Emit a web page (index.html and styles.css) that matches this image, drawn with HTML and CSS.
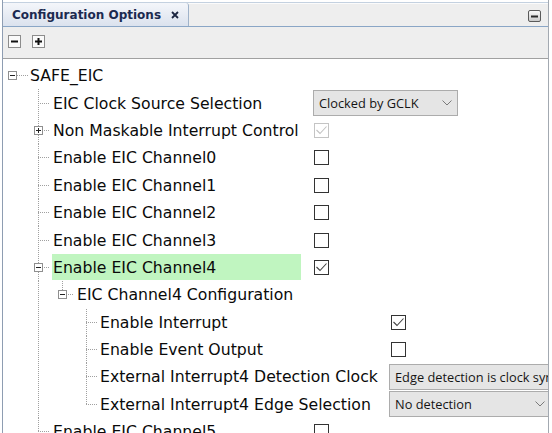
FILE: index.html
```html
<!DOCTYPE html>
<html>
<head>
<meta charset="utf-8">
<title>Configuration Options</title>
<link rel="stylesheet" href="styles.css">
</head>
<body>
<div class="panel">
  <div class="header">
    <div class="tab">
      <span class="tab-title">Configuration Options</span>
      <svg class="tab-close" width="8" height="8" viewBox="0 0 8 8"><path d="M1 1L7 7M7 1L1 7" stroke="#1b2540" stroke-width="1.8"/></svg>
    </div>
    <svg class="minimize" width="13" height="12" viewBox="0 0 13 12">
      <defs><linearGradient id="mg" x1="0" y1="0" x2="0" y2="1"><stop offset="0" stop-color="#fbfbfb"/><stop offset="1" stop-color="#c9c9c9"/></linearGradient></defs>
      <rect x="0.5" y="0.5" width="12" height="11" rx="1.5" fill="url(#mg)" stroke="#5a5a5a"/>
      <rect x="3" y="5.5" width="7" height="2" fill="#2a2a2a"/>
    </svg>
  </div>
  <div class="toolbar">
    <span class="tbtn">
      <svg width="13" height="13" viewBox="0 0 13 13"><rect x="0.5" y="0.5" width="12" height="12" fill="#fafafa" stroke="#8c8c8c"/><rect x="3" y="5.5" width="7" height="2" fill="#111"/></svg>
    </span>
    <span class="tbtn">
      <svg width="13" height="13" viewBox="0 0 13 13"><rect x="0.5" y="0.5" width="12" height="12" fill="#fafafa" stroke="#8c8c8c"/><rect x="3" y="5.5" width="7" height="2" fill="#111"/><rect x="5.5" y="3" width="2" height="7" fill="#111"/></svg>
    </span>
  </div>
  <div class="content">
    <div class="row root">
      <svg class="box" width="9" height="9" viewBox="0 0 9 9"><rect x="0.5" y="0.5" width="8" height="8" fill="#fff" stroke="#8f8f8f"/><path d="M2 4.5H7" stroke="#222"/></svg>
      <span class="hline"></span>
      <span class="label">SAFE_EIC</span>
    </div>
    <div class="group l1">
      <div class="row">
        <span class="conn"></span>
        <span class="label w1">EIC Clock Source Selection</span>
        <div class="select s1"><span>Clocked by GCLK</span><svg class="chev" width="10" height="6" viewBox="0 0 10 6"><path d="M0.5 0.5L5 5L9.5 0.5" fill="none" stroke="#7a7a7a"/></svg></div>
      </div>
      <div class="row">
        <span class="conn"><svg class="box" width="9" height="9" viewBox="0 0 9 9"><rect x="0.5" y="0.5" width="8" height="8" fill="#fff" stroke="#8f8f8f"/><path d="M2 4.5H7M4.5 2V7" stroke="#222"/></svg></span>
        <span class="label w1">Non Maskable Interrupt Control</span>
        <span class="cb dis"><svg width="13" height="13" viewBox="0 0 13 13"><path d="M1.5 6L5 9.5L11.5 2.5" fill="none" stroke="#c2c2c2" stroke-width="1.1"/></svg></span>
      </div>
      <div class="row">
        <span class="conn"></span>
        <span class="label w1">Enable EIC Channel0</span>
        <span class="cb"></span>
      </div>
      <div class="row">
        <span class="conn"></span>
        <span class="label w1">Enable EIC Channel1</span>
        <span class="cb"></span>
      </div>
      <div class="row">
        <span class="conn"></span>
        <span class="label w1">Enable EIC Channel2</span>
        <span class="cb"></span>
      </div>
      <div class="row">
        <span class="conn"></span>
        <span class="label w1">Enable EIC Channel3</span>
        <span class="cb"></span>
      </div>
      <div class="row">
        <span class="conn"><svg class="box" width="9" height="9" viewBox="0 0 9 9"><rect x="0.5" y="0.5" width="8" height="8" fill="#fff" stroke="#8f8f8f"/><path d="M2 4.5H7" stroke="#222"/></svg></span>
        <span class="label w1 selected">Enable EIC Channel4</span>
        <span class="cb"><svg width="13" height="13" viewBox="0 0 13 13"><path d="M1.5 6L5 9.5L11.5 2.5" fill="none" stroke="#444" stroke-width="1.1"/></svg></span>
      </div>
      <div class="sub">
        <div class="row">
          <span class="conn last"><svg class="box" width="9" height="9" viewBox="0 0 9 9"><rect x="0.5" y="0.5" width="8" height="8" fill="#fff" stroke="#8f8f8f"/><path d="M2 4.5H7" stroke="#222"/></svg></span>
          <span class="label">EIC Channel4 Configuration</span>
        </div>
        <div class="group l3">
          <div class="row">
            <span class="conn c3"></span>
            <span class="label w3">Enable Interrupt</span>
            <span class="cb cb3"><svg width="13" height="13" viewBox="0 0 13 13"><path d="M1.5 6L5 9.5L11.5 2.5" fill="none" stroke="#444" stroke-width="1.1"/></svg></span>
          </div>
          <div class="row">
            <span class="conn c3"></span>
            <span class="label w3">Enable Event Output</span>
            <span class="cb cb3"></span>
          </div>
          <div class="row">
            <span class="conn c3"></span>
            <span class="label w3">External Interrupt4 Detection Clock</span>
            <div class="select s2"><span>Edge detection is clock synchronized</span></div>
          </div>
          <div class="row">
            <span class="conn c3 last"></span>
            <span class="label w3">External Interrupt4 Edge Selection</span>
            <div class="select s3"><span>No detection</span><svg class="chev" width="10" height="6" viewBox="0 0 10 6"><path d="M0.5 0.5L5 5L9.5 0.5" fill="none" stroke="#7a7a7a"/></svg></div>
          </div>
        </div>
      </div>
      <div class="row">
        <span class="conn last"></span>
        <span class="label w1">Enable EIC Channel5</span>
        <span class="cb"></span>
      </div>
    </div>
  </div>
</div>
</body>
</html>
```

FILE: styles.css
```css
* { box-sizing: border-box; }

body {
  margin: 0;
  width: 552px;
  height: 433px;
  overflow: hidden;
  background: #ffffff;
  font-family: "DejaVu Sans", Verdana, sans-serif;
}

.panel {
  margin-left: 2px;
  width: 547px;
  height: 433px;
  border-left: 1px solid #8e9db2;
  border-right: 1px solid #a3a9b1;
  display: flex;
  flex-direction: column;
}

.header {
  margin-top: 2px;
  height: 25px;
  flex: none;
  border-top: 1px solid #c4d1e0;
  border-bottom: 1px solid #8aa6c6;
  background: linear-gradient(#fbfbfb 0 1px, #eeeeee 1px);
  display: flex;
  align-items: stretch;
}

.tab {
  width: 186px;
  display: flex;
  align-items: center;
  padding-left: 9px;
  background: linear-gradient(#f4f6fa, #dbe2ee);
  border-right: 1px solid #9fb2c9;
  border-top-right-radius: 3px;
}

.tab-title {
  font-family: "DejaVu Sans", sans-serif;
  font-weight: bold;
  font-size: 12px;
  color: #1b2a50;
}

.tab-close {
  margin-left: 10px;
  margin-top: 1px;
}

.minimize {
  margin-left: auto;
  margin-right: 7px;
  margin-top: 7px;
  align-self: flex-start;
}

.toolbar {
  height: 32px;
  flex: none;
  background: #eeeeee;
  border-bottom: 1px solid #a0a0a0;
  padding: 8px 0 0 5px;
  display: flex;
  gap: 11px;
  align-items: flex-start;
}

.tbtn { width: 13px; height: 13px; display: block; }
.tbtn svg { display: block; }

.content {
  flex: 1;
  overflow: hidden;
  padding-top: 3px;
  font-size: 15.7px;
  color: #0a0a0a;
}

.row {
  height: 27.4px;
  display: flex;
  align-items: center;
  white-space: nowrap;
}

.root { padding-left: 5px; }

.box { display: block; flex: none; }

.hline {
  width: 11px;
  height: 1px;
  margin-right: 1px;
  flex: none;
  background: repeating-linear-gradient(to right, #a0a0a0 0 1px, transparent 1px 2px);
}

.label {
  padding-left: 1px;
  display: flex;
  align-items: center;
  height: 26px;
}

.group.l1 { margin-left: 35px; }

.conn {
  align-self: stretch;
  width: 14px;
  flex: none;
  display: flex;
  align-items: center;
  background-image:
    repeating-linear-gradient(to bottom, #a0a0a0 0 1px, transparent 1px 2px),
    repeating-linear-gradient(to right, #a0a0a0 0 1px, transparent 1px 2px);
  background-size: 1px 100%, 12px 1px;
  background-position: 0 0, 0 50%;
  background-repeat: no-repeat;
}

.conn.last { background-size: 1px 50%, 12px 1px; }
.conn .box { margin-left: -4px; }
.conn.c3 { width: 13px; }

.w1 { width: 249px; margin-right: 12px; flex: none; }
.w3 { width: 278px; margin-right: 12px; flex: none; }

.selected { background: #c0f5c0; }

.sub {
  padding-left: 24px;
  background-image: repeating-linear-gradient(to bottom, #a0a0a0 0 1px, transparent 1px 2px);
  background-size: 1px 100%;
  background-repeat: no-repeat;
}

.group.l3 { margin-left: 24px; }

.select {
  height: 26px;
  flex: none;
  border: 1px solid #acacac;
  background: #e5e5e5;
  display: flex;
  align-items: center;
  padding-left: 5px;
  font-family: "Open Sans", "Noto Sans", sans-serif;
  font-size: 12.8px;
  color: #151515;
  overflow: hidden;
}

.s1 { width: 145px; }
.s2 { width: 230px; }
.s3 { width: 162px; }

.chev { margin-left: auto; margin-right: 5px; flex: none; }

.cb {
  width: 15px;
  height: 15px;
  flex: none;
  border: 1px solid #333;
  background: #fff;
  margin-left: 1px;
  display: flex;
}
.cb svg { display: block; }
.cb.dis { border-color: #c4c4c4; }
.cb3 { margin-left: 2px; }
```
